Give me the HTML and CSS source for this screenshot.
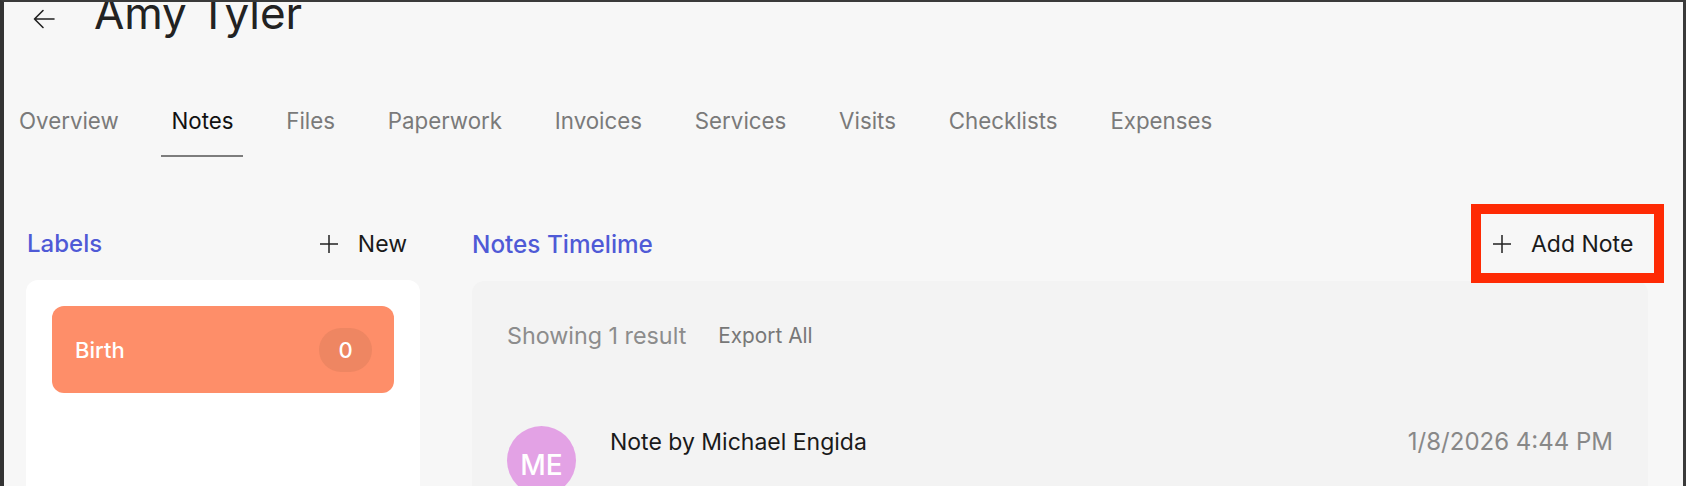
FILE: index.html
```html
<!DOCTYPE html>
<html>
<head>
<meta charset="utf-8">
<link rel="stylesheet" href="styles.css">
</head>
<body>
<div class="frame">
  <header class="page-head">
    <svg class="back" width="24" height="22" viewBox="0 0 24 22" aria-hidden="true">
      <path d="M22 11H2.5M11 2.5L2.5 11L11 19.5" fill="none" stroke="#222" stroke-width="1.6" stroke-linecap="round" stroke-linejoin="round"/>
    </svg>
    <h1 class="title">Amy Tyler</h1>
  </header>

  <nav class="tabs">
    <a class="tab">Overview</a>
    <a class="tab active">Notes</a>
    <a class="tab">Files</a>
    <a class="tab">Paperwork</a>
    <a class="tab">Invoices</a>
    <a class="tab">Services</a>
    <a class="tab">Visits</a>
    <a class="tab">Checklists</a>
    <a class="tab">Expenses</a>
  </nav>

  <main class="main">
    <section class="labels-col">
      <div class="col-head labels-head">
        <h2 class="heading">Labels</h2>
        <button class="text-btn new-btn">
          <svg width="20" height="20" viewBox="0 0 20 20" aria-hidden="true"><path d="M10 1V19M1 10H19" stroke="#222" stroke-width="1.5"/></svg>
          <span>New</span>
        </button>
      </div>
      <div class="labels-card">
        <div class="label-item">
          <span class="label-name">Birth</span>
          <span class="label-count">0</span>
        </div>
      </div>
    </section>

    <section class="notes-col">
      <div class="col-head">
        <h2 class="heading notes-heading">Notes Timelime</h2>
        <button class="text-btn add-btn">
          <svg width="20" height="20" viewBox="0 0 20 20" aria-hidden="true"><path d="M10 1V19M1 10H19" stroke="#222" stroke-width="1.5"/></svg>
          <span>Add Note</span>
        </button>
      </div>
      <div class="notes-panel">
        <div class="result-row">
          <span class="result-count">Showing 1 result</span>
          <span class="export">Export All</span>
        </div>
        <div class="note">
          <div class="avatar">ME</div>
          <div class="note-author">Note by Michael Engida</div>
          <div class="note-date">1/8/2026 4:44 PM</div>
        </div>
      </div>
    </section>
  </main>
</div>
</body>
</html>
```
FILE: styles.css
```css
* { box-sizing: border-box; }
html, body { margin: 0; padding: 0; }
body {
  background: #f7f7f7;
  font-family: "Inter", "Liberation Sans", sans-serif;
  color: #1a1a1a;
}
.frame {
  height: 486px;
  overflow: hidden;
  background: #f7f7f7;
  border-top: 2px solid #3a3a3a;
  border-left: 4px solid #333;
  border-right: 3px solid #3a3a3a;
}

/* header */
.page-head {
  display: flex;
  align-items: flex-start;
  margin-top: -15px;
  padding-left: 28px;
  height: 53px;
}
.back { margin-top: 21px; flex: none; }
.title {
  margin: 0 0 0 38px;
  font-size: 44px;
  font-weight: 400;
  line-height: 53px;
  color: #222;
  letter-spacing: -0.1px;
}

/* tabs */
.tabs {
  display: flex;
  gap: 32.8px;
  margin-top: 67px;
  padding-left: 5px;
}
.tab {
  font-size: 22.3px;
  line-height: 28px;
  padding: 0 10px 20px;
  color: #7a7a7a;
  border-bottom: 2px solid transparent;
}
.tab.active {
  color: #111;
  border-bottom-color: #7d7d7d;
}

/* main */
.main {
  display: flex;
  margin-top: 57px;
  padding-left: 22px;
  gap: 52px;
}
.col-head {
  display: flex;
  align-items: center;
  justify-content: space-between;
  height: 59px;
}
.heading {
  margin: 0;
  font-size: 24px;
  font-weight: 500;
  color: #4f5ad6;
}
.notes-heading { font-size: 24.3px; }
.text-btn {
  display: flex;
  align-items: center;
  border: 0;
  background: transparent;
  padding: 0;
  font-family: inherit;
  color: #1a1a1a;
}

.labels-col { width: 394px; flex: none; }
.labels-head { padding: 0 13px 0 1px; }
.new-btn { gap: 19px; font-size: 23px; }

.labels-card {
  margin-top: 7px;
  background: #fff;
  border-radius: 12px;
  padding: 26px;
  height: 320px;
}
.label-item {
  display: flex;
  align-items: center;
  justify-content: space-between;
  height: 87px;
  padding: 0 22px 0 23px;
  background: #fe8e69;
  border-radius: 12px;
  color: #fff;
}
.label-name { font-size: 22px; font-weight: 500; }
.label-count {
  display: flex;
  align-items: center;
  justify-content: center;
  width: 53px;
  height: 44px;
  border-radius: 22px;
  background: #ee8662;
  font-size: 22px;
  font-weight: 500;
}

.notes-col { width: 1176px; flex: none; }
.add-btn {
  position: relative;
  width: 173px;
  height: 59px;
  margin-right: -6px;
  padding-left: 11px;
  gap: 19px;
  font-size: 23px;
}
.add-btn::after {
  content: "";
  position: absolute;
  inset: -10px;
  border: 10px solid #fe2a04;
}

.notes-panel {
  margin-top: 8px;
  background: #f3f3f3;
  border-radius: 12px;
  padding: 40px 35px 0;
  height: 300px;
}
.result-row {
  display: flex;
  align-items: center;
  gap: 32px;
  height: 28px;
}
.result-count { font-size: 23.3px; color: #8c8c8c; }
.export { font-size: 20.8px; color: #777; }

.note {
  display: flex;
  align-items: flex-start;
  margin-top: 77px;
}
.avatar {
  width: 69px;
  height: 69px;
  flex: none;
  border-radius: 50%;
  background: #e3a2e5;
  color: #fff;
  display: flex;
  justify-content: center;
  align-items: flex-start;
  padding-top: 22px;
  font-size: 28px;
  font-weight: 500;
}
.note-author {
  margin-left: 34px;
  margin-top: 2px;
  font-size: 23px;
  line-height: 28px;
  color: #1a1a1a;
}
.note-date {
  margin-left: auto;
  margin-top: 2px;
  font-size: 24px;
  line-height: 28px;
  color: #888;
}
```
